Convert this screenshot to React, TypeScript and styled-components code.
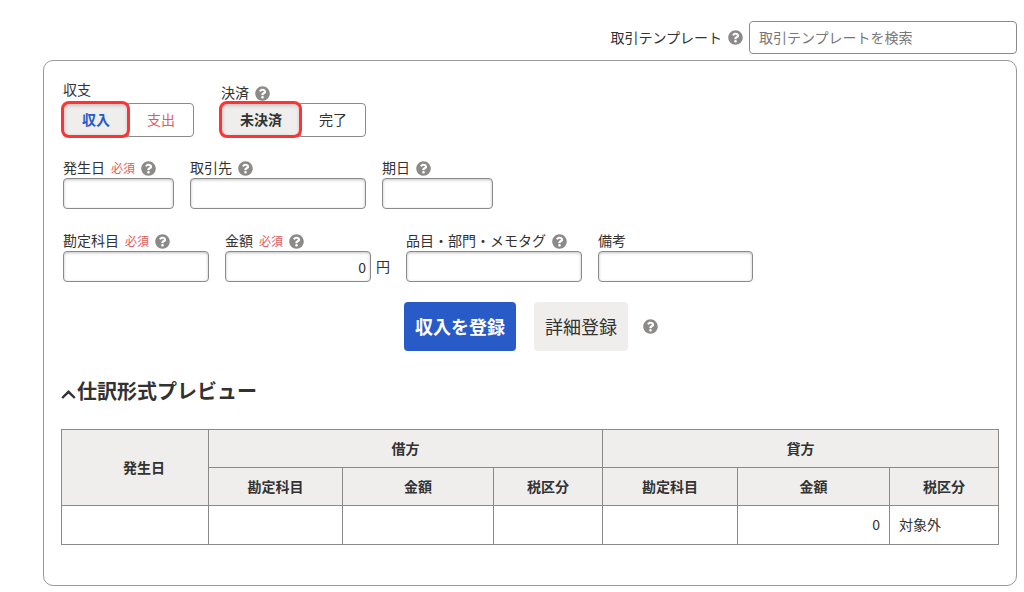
import React, { useId, useState } from "react";
import styled, { createGlobalStyle, css } from "styled-components";

const color = {
  text: "#323232",
  border: "#8c8989",
  muted: "#8c8989",
  fill: "#f0eeec",
  primary: "#285ac8",
  danger: "#e65a5a",
  highlight: "#ff3333",
};

const GlobalStyle = createGlobalStyle`
  *, *::before, *::after { box-sizing: border-box; }
  body {
    margin: 0;
    background: #fff;
    color: ${color.text};
    font-family: "Noto Sans CJK JP", "Noto Sans", sans-serif;
    font-size: 14px;
    line-height: 20px;
  }
  button, input { font: inherit; color: inherit; }
`;

const Page = styled.main`
  padding: 21px 7px 6px 43px;
`;

const TemplateBar = styled.div`
  display: flex;
  align-items: center;
  justify-content: flex-end;
  gap: 6px;
  margin-bottom: 6px;
`;

const LabelRow = styled.div<{ $raised?: boolean }>`
  display: flex;
  align-items: center;
  gap: 6px;
  height: 20px;
  white-space: nowrap;
  ${(p) => p.$raised && css`margin-bottom: 3px;`}
`;

const LabelText = styled.label`
  padding-bottom: 2px;
`;

const Required = styled.span`
  color: ${color.danger};
  font-size: 12px;
`;

const HelpButton = styled.button`
  display: flex;
  flex: none;
  padding: 0;
  border: 0;
  background: none;
  cursor: pointer;
`;

const SearchInput = styled.input`
  width: 268px;
  height: 33px;
  padding: 0 9px 2px;
  border: 1px solid ${color.border};
  border-radius: 4px;
  background: #fff;
  &::placeholder { color: #777; opacity: 1; }
`;

const Panel = styled.section`
  padding: 19px 18px 40px 17px;
  border: 1px solid #9a9898;
  border-radius: 10px;
`;

const FieldRow = styled.div<{ $gap?: number; $space: number }>`
  display: flex;
  flex-wrap: wrap;
  align-items: flex-end;
  gap: ${(p) => p.$gap ?? 16}px;
  padding-left: 2px;
  margin-bottom: ${(p) => p.$space}px;
`;

const FieldBox = styled.div`
  display: flex;
  flex-direction: column;
`;

const InputLine = styled.div`
  display: flex;
  align-items: center;
  gap: 5px;
`;

const Unit = styled.span`
  padding-bottom: 2px;
`;

const TextInput = styled.input<{ $width: number }>`
  width: ${(p) => p.$width}px;
  height: 31px;
  padding: 0 4px;
  border: 1px solid ${color.border};
  border-radius: 4px;
  background: #fff;
  box-shadow: inset 0 1px 3px rgba(0, 0, 0, 0.25);
  text-align: ${(p) => (p.inputMode === "numeric" ? "right" : "left")};
`;

const SegmentGroup = styled.div`
  display: flex;
`;

const Segment = styled.button<{ $tone: string }>`
  position: relative;
  height: 34px;
  padding: 0 18px 2px;
  border: 1px solid ${color.border};
  background: #fff;
  color: ${(p) => p.$tone};
  cursor: pointer;

  &:first-child { border-radius: 4px 0 0 4px; border-right: 0; }
  &:last-child { border-radius: 0 4px 4px 0; }

  &[aria-pressed="true"] {
    z-index: 1;
    background: ${color.fill};
    font-weight: 700;
    box-shadow: inset 0 1px 4px rgba(0, 0, 0, 0.25);
  }
  &[aria-pressed="true"]::after {
    content: "";
    position: absolute;
    inset: -3px -2px -2px -3px;
    border: 3px solid ${color.highlight};
    border-radius: 8px;
  }
`;

const Actions = styled.div`
  display: flex;
  align-items: center;
  justify-content: center;
  gap: 15px;
  padding-left: 3px;
  margin-bottom: 25px;
`;

const ActionButtons = styled.div`
  display: flex;
  gap: 18px;
`;

const ActionButton = styled.button<{ $primary?: boolean }>`
  height: 49px;
  padding: 0 11px 2px;
  border: 0;
  border-radius: 4px;
  font-size: 18px;
  cursor: pointer;
  background: ${(p) => (p.$primary ? color.primary : color.fill)};
  color: ${(p) => (p.$primary ? "#fff" : color.text)};
  font-weight: ${(p) => (p.$primary ? 700 : 400)};
`;

const PreviewHeading = styled.h2`
  margin: 0 0 23px;
  font-size: 20px;
  line-height: 30px;
`;

const PreviewToggle = styled.button`
  display: flex;
  align-items: center;
  gap: 1px;
  padding: 0;
  border: 0;
  background: none;
  font-weight: 700;
  cursor: pointer;
`;

const JournalTable = styled.table`
  width: 100%;
  table-layout: fixed;
  border-collapse: collapse;

  th, td {
    height: 38px;
    padding: 0 9px 2px;
    border: 1px solid ${color.border};
  }
  th { background: ${color.fill}; font-weight: 700; text-align: center; }
  th[rowspan] { padding-left: 27px; }
  tbody td { height: 39px; }
`;

const Cell = styled.td<{ $numeric?: boolean }>`
  text-align: ${(p) => (p.$numeric ? "right" : "left")};
`;

function Help({ topic }: { topic: string }) {
  return (
    <HelpButton type="button" aria-label={`${topic}のヘルプ`}>
      <svg width="15" height="15" viewBox="0 0 512 512" aria-hidden="true">
        <path
          fill={color.muted}
          d="M504 256c0 136.997-111.043 248-248 248S8 392.997 8 256C8 119.083 119.043 8 256 8s248 111.083 248 248zM262.655 90c-54.497 0-89.255 22.957-116.549 63.758-3.536 5.286-2.353 12.415 2.715 16.258l34.699 26.31c5.205 3.947 12.621 3.008 16.665-2.122 17.864-22.658 30.113-35.797 57.303-35.797 20.429 0 45.698 13.148 45.698 32.958 0 14.976-12.363 22.667-32.534 33.976C247.128 238.528 216 254.941 216 296v4c0 6.627 5.373 12 12 12h56c6.627 0 12-5.373 12-12v-1.333c0-28.462 83.186-29.647 83.186-106.667 0-58.002-60.165-102-116.531-102zM256 338c-25.365 0-46 20.635-46 46 0 25.364 20.635 46 46 46s46-20.636 46-46c0-25.365-20.635-46-46-46z"
        />
      </svg>
    </HelpButton>
  );
}

interface FieldProps {
  label: string;
  width: number;
  required?: boolean;
  help?: boolean;
  unit?: string;
  numeric?: boolean;
  initial?: string;
}

function Field({ label, width, required, help = true, unit, numeric, initial = "" }: FieldProps) {
  const id = useId();
  return (
    <FieldBox>
      <LabelRow>
        <LabelText htmlFor={id}>{label}</LabelText>
        {required && <Required>必須</Required>}
        {help && <Help topic={label} />}
      </LabelRow>
      <InputLine>
        <TextInput
          id={id}
          type="text"
          inputMode={numeric ? "numeric" : "text"}
          $width={width}
          required={required}
          defaultValue={initial}
        />
        {unit && <Unit>{unit}</Unit>}
      </InputLine>
    </FieldBox>
  );
}

interface ChoiceProps {
  label: string;
  help?: boolean;
  options: { text: string; tone: string }[];
}

function Choice({ label, help, options }: ChoiceProps) {
  const id = useId();
  const [selected, setSelected] = useState(0);
  return (
    <FieldBox>
      <LabelRow $raised={!help}>
        <LabelText as="span" id={id}>{label}</LabelText>
        {help && <Help topic={label} />}
      </LabelRow>
      <SegmentGroup role="group" aria-labelledby={id}>
        {options.map((o, i) => (
          <Segment
            key={o.text}
            type="button"
            $tone={o.tone}
            aria-pressed={selected === i}
            onClick={() => setSelected(i)}
          >
            {o.text}
          </Segment>
        ))}
      </SegmentGroup>
    </FieldBox>
  );
}

const columnWidths = [147, 134, 151, 109, 135, 152, 109];

export default function App() {
  const [open, setOpen] = useState(true);
  return (
    <>
      <GlobalStyle />
      <Page>
        <TemplateBar>
          <LabelRow>
            <LabelText htmlFor="template">取引テンプレート</LabelText>
            <Help topic="取引テンプレート" />
          </LabelRow>
          <SearchInput id="template" type="text" placeholder="取引テンプレートを検索" />
        </TemplateBar>

        <Panel>
          <FieldRow $gap={27} $space={21}>
            <Choice
              label="収支"
              options={[
                { text: "収入", tone: color.primary },
                { text: "支出", tone: color.danger },
              ]}
            />
            <Choice
              label="決済"
              help
              options={[
                { text: "未決済", tone: color.text },
                { text: "完了", tone: color.text },
              ]}
            />
          </FieldRow>

          <FieldRow $space={22}>
            <Field label="発生日" width={111} required />
            <Field label="取引先" width={176} />
            <Field label="期日" width={111} />
          </FieldRow>

          <FieldRow $space={20}>
            <Field label="勘定科目" width={146} required />
            <Field label="金額" width={146} required numeric initial="0" unit="円" />
            <Field label="品目・部門・メモタグ" width={176} />
            <Field label="備考" width={155} help={false} />
          </FieldRow>

          <Actions>
            <ActionButtons>
              <ActionButton type="button" $primary>収入を登録</ActionButton>
              <ActionButton type="button">詳細登録</ActionButton>
            </ActionButtons>
            <Help topic="登録" />
          </Actions>

          <PreviewHeading>
            <PreviewToggle type="button" aria-expanded={open} onClick={() => setOpen(!open)}>
              <svg width="15" height="20" viewBox="0 0 15 20" fill="none" aria-hidden="true">
                <path d="M1.2 17 7.5 10.8 13.8 17" stroke={color.text} strokeWidth="2.4" />
              </svg>
              仕訳形式プレビュー
            </PreviewToggle>
          </PreviewHeading>

          {open && (
            <JournalTable>
              <colgroup>
                {columnWidths.map((w, i) => (
                  <col key={i} width={w} />
                ))}
              </colgroup>
              <thead>
                <tr>
                  <th rowSpan={2} scope="col">発生日</th>
                  <th colSpan={3} scope="colgroup">借方</th>
                  <th colSpan={3} scope="colgroup">貸方</th>
                </tr>
                <tr>
                  <th scope="col">勘定科目</th>
                  <th scope="col">金額</th>
                  <th scope="col">税区分</th>
                  <th scope="col">勘定科目</th>
                  <th scope="col">金額</th>
                  <th scope="col">税区分</th>
                </tr>
              </thead>
              <tbody>
                <tr>
                  <Cell />
                  <Cell />
                  <Cell $numeric />
                  <Cell />
                  <Cell />
                  <Cell $numeric>0</Cell>
                  <Cell>対象外</Cell>
                </tr>
              </tbody>
            </JournalTable>
          )}
        </Panel>
      </Page>
    </>
  );
}
